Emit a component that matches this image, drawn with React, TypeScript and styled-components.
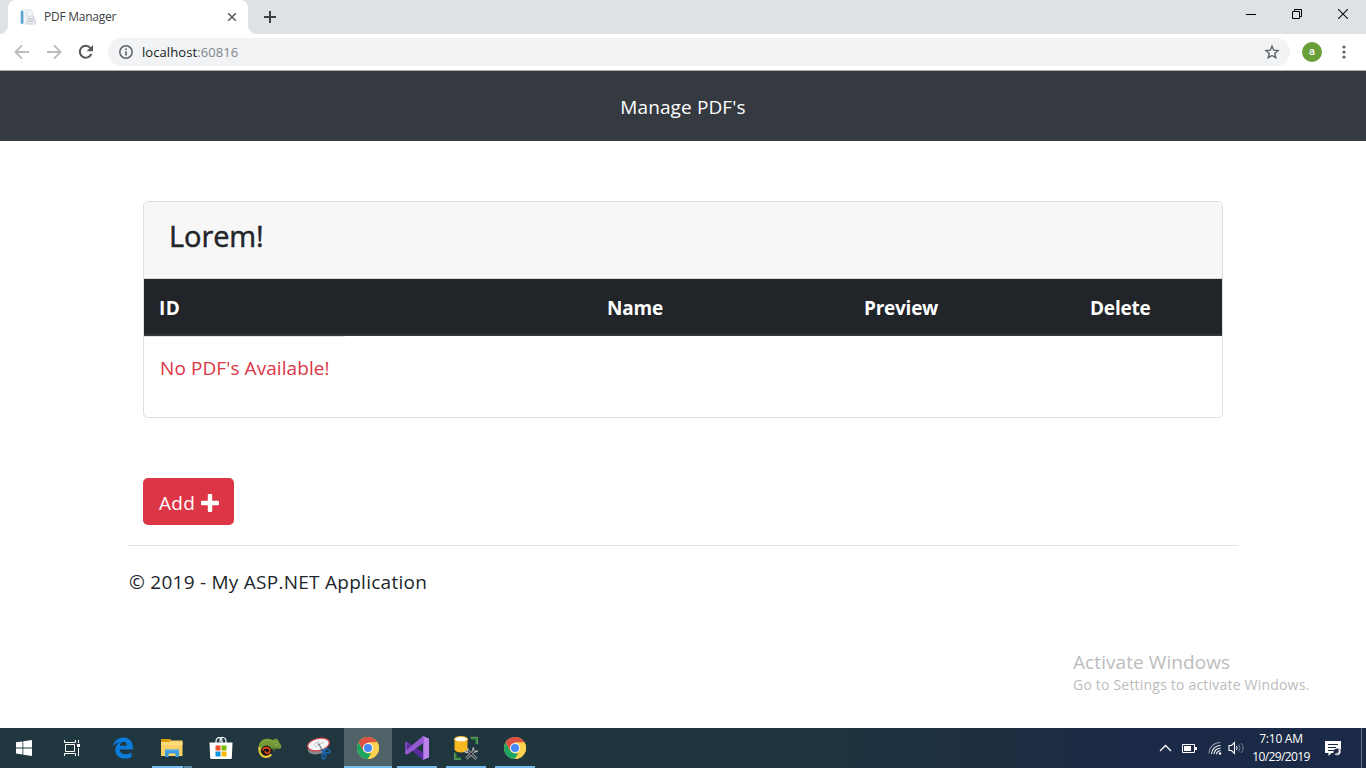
import React from "react";
import styled, { createGlobalStyle, css } from "styled-components";

const Global = createGlobalStyle`
  * { box-sizing: border-box; }
  html, body { margin: 0; padding: 0; background: #fff; overflow: hidden; }
  body { font-family: "Open Sans", "Noto Sans", sans-serif; color: #212529; }
  svg { display: block; flex: none; }
`;

const Screen = styled.div`
  width: 1366px;
  height: 768px;
  display: flex;
  flex-direction: column;
  overflow: hidden;
  background: #fff;
`;

const Text = styled.span<{ $size: number; $spacing?: number; $weight?: number; $color?: string }>`
  display: block;
  white-space: nowrap;
  font-size: ${(p) => p.$size}px;
  letter-spacing: ${(p) => p.$spacing ?? 0}px;
  font-weight: ${(p) => p.$weight ?? 400};
  color: ${(p) => p.$color ?? "inherit"};
`;

/* ---------- browser chrome ---------- */
const TabStrip = styled.div`
  height: 34px;
  flex: none;
  display: flex;
  background: #dee1e6;
  padding-left: 8px;
`;

const Tab = styled.div`
  position: relative;
  width: 240px;
  height: 34px;
  background: #fff;
  border-radius: 8px 8px 0 0;
  display: flex;
  align-items: center;
  padding: 0 11px 0 12px;
  gap: 8px;
  &::before,
  &::after {
    content: "";
    position: absolute;
    bottom: 0;
    width: 8px;
    height: 8px;
  }
  &::before {
    left: -8px;
    background: radial-gradient(circle at 0 0, transparent 7.5px, #fff 8px);
  }
  &::after {
    right: -8px;
    background: radial-gradient(circle at 100% 0, transparent 7.5px, #fff 8px);
  }
`;

const TabTitle = styled(Text)`
  flex: 1;
  line-height: 16px;
`;

const NewTab = styled.div`
  width: 44px;
  display: flex;
  align-items: center;
  justify-content: center;
`;

const WindowButtons = styled.div`
  margin-left: auto;
  display: flex;
  height: 28px;
`;

const WindowButton = styled.div`
  width: 46px;
  display: flex;
  align-items: center;
  justify-content: center;
`;

const Toolbar = styled.div`
  height: 37px;
  flex: none;
  display: flex;
  align-items: center;
  background: #fff;
  border-bottom: 1px solid #a9aeae;
  padding: 0 13px 0 14px;
`;

const NavButtons = styled.div`
  display: flex;
  gap: 16px;
  margin-right: 14px;
`;

const AddressBar = styled.div`
  width: 1182px;
  height: 28px;
  border-radius: 14px;
  background: #f1f3f4;
  display: flex;
  align-items: center;
  padding: 0 10px;
`;

const Url = styled(Text)`
  margin-left: 8px;
  flex: 1;
  line-height: 20px;
  em {
    font-style: normal;
    color: #80868b;
  }
`;

const Avatar = styled.div`
  width: 20px;
  height: 20px;
  border-radius: 50%;
  background: #689f38;
  color: #fff;
  margin-left: 12px;
  font: 500 11px/19px Roboto, sans-serif;
  text-align: center;
`;

const MenuSlot = styled.div`
  margin-left: 20px;
`;

/* ---------- page ---------- */
const Navbar = styled.nav`
  height: 70px;
  flex: none;
  background: #343a40;
  display: flex;
  align-items: center;
  justify-content: center;
  padding-top: 2px;
`;

const Page = styled.main`
  flex: 1;
  display: flex;
  flex-direction: column;
  width: 1110px;
  margin: 0 auto;
`;

const Card = styled.section`
  margin: 60px 15px 0;
  height: 217px;
  border: 1px solid #dfdfdf;
  border-radius: 5px;
  overflow: hidden;
`;

const CardHeader = styled.header`
  height: 77px;
  background: #f7f7f7;
  border-bottom: 1px solid #d8d8d8;
  padding: 14px 25px 0;
  line-height: 40px;
`;

const CardTitle = styled(Text)`
  -webkit-text-stroke: 0.5px currentColor;
`;

const HeadRow = styled.div`
  height: 57px;
  display: grid;
  grid-template-columns: 448px 257px 226px 1fr;
  align-items: center;
  padding-left: 15px;
  background: #212529;
  color: #fff;
  border-bottom: 2px solid #32383e;
  padding-top: 3px;
`;

const EmptyCell = styled.div`
  width: 201px;
  height: 60px;
  border-top: 1px solid #dee2e6;
  padding: 16px 0 0 16px;
  line-height: 30px;
`;

const AddButton = styled.button`
  margin: 60px 0 0 15px;
  width: 91px;
  height: 47px;
  border: 0;
  border-radius: 5px;
  background: #dc3545;
  color: #fff;
  font-family: inherit;
  display: flex;
  align-items: center;
  gap: 6px;
  padding: 2px 0 0 16px;
`;

const Footer = styled.footer`
  margin-top: 20px;
  border-top: 1px solid #e4e4e4;
  padding: 21px 0 0 1px;
  line-height: 30px;
`;

const Watermark = styled.aside`
  align-self: flex-end;
  width: 293px;
  height: 80px;
  flex: none;
  color: #bcbcbc;
`;

const WatermarkTitle = styled(Text)`
  line-height: 28px;
`;

const WatermarkNote = styled(Text)`
  line-height: 18px;
`;

/* ---------- taskbar ---------- */
const Taskbar = styled.div`
  height: 40px;
  flex: none;
  display: flex;
  background: linear-gradient(90deg, #20373f 0%, #20363f 52%, #1e3140 65%, #1d2d41 76%, #1b2a46 82%, #1a2945 100%);
`;

const SystemSlot = styled.div`
  width: 48px;
  display: flex;
  align-items: center;
  justify-content: center;
`;

const Apps = styled.div`
  display: flex;
  gap: 1px;
  margin-left: 3px;
`;

const AppSlot = styled.div<{ $state?: "open" | "active" | "stack" }>`
  width: 48px;
  height: 40px;
  display: flex;
  align-items: center;
  justify-content: center;
  position: relative;
  ${(p) => p.$state === "active" && css`background: #4f6268;`}
  ${(p) =>
    p.$state &&
    css`
      &::after {
        content: "";
        position: absolute;
        bottom: 0;
        height: 2px;
        left: ${p.$state === "active" ? 0 : 4}px;
        right: ${p.$state === "active" ? 0 : 4}px;
        background: ${p.$state === "stack"
          ? "linear-gradient(90deg, #76b9ed 0 31px, #35505e 31px 32px, #5689a8 32px)"
          : "#76b9ed"};
      }
    `}
`;

const Tray = styled.div`
  margin-left: auto;
  display: flex;
  align-items: center;
  color: #fff;
`;

const TrayItem = styled.div<{ $width: number }>`
  width: ${(p) => p.$width}px;
  display: flex;
  justify-content: center;
`;

const Clock = styled.div`
  width: 72px;
  display: flex;
  flex-direction: column;
  align-items: center;
  line-height: 18px;
  padding-bottom: 1px;
`;

const ShowDesktop = styled.div`
  width: 5px;
  height: 40px;
  margin-left: 12px;
  border-left: 1px solid #66738a;
`;

/* ---------- icons ---------- */
const Favicon = () => (
  <svg width="16" height="16" viewBox="0 0 16 16">
    <path d="M1 .8h9.500L13 3v12H1z" fill="#f3f5f7" stroke="#d3d8dd" strokeWidth=".6" />
    <path d="M.8 2h2.600v12.600H.8z" fill="#5aa3cf" />
    <path d="M5 4h4M5 6h3M5 8h2" stroke="#d3d9df" strokeWidth=".8" />
    <path d="M8.500 7h5v3h1.800v5H7v-5h1.500z" fill="#eceff2" stroke="#c3c9d1" strokeWidth=".7" />
    <path d="M8.500 12.300h5M8.500 10h5" stroke="#a9b2be" strokeWidth=".8" />
  </svg>
);

const CloseTab = () => (
  <svg width="10" height="10" viewBox="0 0 10 10">
    <path d="M1.200 1.200l7.600 7.600M8.800 1.200L1.200 8.800" stroke="#5a5d61" strokeWidth="1.600" />
  </svg>
);

const Plus = () => (
  <svg width="12" height="12" viewBox="0 0 12 12">
    <path d="M6 0v12M0 6h12" stroke="#3c4043" strokeWidth="2" />
  </svg>
);

const Minimize = () => (
  <svg width="10" height="10" viewBox="0 0 10 10" shapeRendering="crispEdges">
    <path d="M0 5h10v1H0z" fill="#000" />
  </svg>
);

const Restore = () => (
  <svg width="10" height="10" viewBox="0 0 10 10" fill="none" stroke="#000">
    <path d="M.5 2.500h7v7h-7zM2.500 2.500v-2h7v7h-2" />
  </svg>
);

const CloseWindow = () => (
  <svg width="10" height="10" viewBox="0 0 10 10">
    <path d="M0 0l10 10M10 0L0 10" stroke="#111" strokeWidth="1.100" />
  </svg>
);

const Arrow = ({ flip }: { flip?: boolean }) => (
  <svg width="16" height="16" viewBox="0 0 16 16" fill="none" stroke="#b9bbbe" strokeWidth="1.800">
    <path d={flip ? "M1 8h13M8 1.400L14.600 8 8 14.600" : "M15 8H2M8 1.400L1.400 8 8 14.600"} />
  </svg>
);

const Reload = () => (
  <svg width="16" height="16" viewBox="0 0 16 16">
    <path d="M13.300 9.800A5.900 5.900 0 1 1 12.300 4" fill="none" stroke="#55585c" strokeWidth="2" />
    <path d="M15 1v6.300H8.700z" fill="#55585c" />
  </svg>
);

const Info = () => (
  <svg width="16" height="16" viewBox="0 0 16 16">
    <circle cx="8" cy="8" r="6.200" fill="none" stroke="#5f6368" strokeWidth="1.500" />
    <path d="M7.200 7.200h1.600v4.200H7.200zM7.200 4.500h1.600v1.600H7.200z" fill="#5f6368" />
  </svg>
);

const Star = () => (
  <svg width="16" height="16" viewBox="0 0 16 16">
    <path
      d="M8 2.200l1.700 4 4.300.4-3.250 2.850 1 4.250L8 11.450 4.250 13.700l1-4.250L2 6.600l4.300-.4z"
      fill="none"
      stroke="#5f6368"
      strokeWidth="1.400"
    />
  </svg>
);

const Dots = () => (
  <svg width="4" height="14" viewBox="0 0 4 14" fill="#5f6368">
    <circle cx="2" cy="2" r="1.600" />
    <circle cx="2" cy="7" r="1.600" />
    <circle cx="2" cy="12" r="1.600" />
  </svg>
);

const BoldPlus = () => (
  <svg width="18" height="18" viewBox="0 0 18 18">
    <path
      d="M7.800 0h2.400q1 0 1 1v5.800H17q1 0 1 1v2.400q0 1-1 1h-5.800V17q0 1-1 1H7.800q-1 0-1-1v-5.800H1q-1 0-1-1V7.800q0-1 1-1h5.800V1q0-1 1-1z"
      fill="#fff"
    />
  </svg>
);

const StartIcon = () => (
  <svg width="16" height="16" viewBox="0 0 16 16" fill="#fff">
    <path d="M0 2.300l6.500-.9v6.100H0zM7.300 1.300L16 0v7.500H7.300zM0 8.400h6.500v6.100L0 13.600zM7.300 8.400H16V16l-8.700-1.300z" />
  </svg>
);

const TaskViewIcon = () => (
  <svg width="16" height="16" viewBox="0 0 16 16" fill="none" stroke="#fff">
    <path d="M1.500 4.500h9v7h-9z" strokeWidth="1" />
    <path d="M.5 0v2.500h11V0M.5 16v-2.500h11V16M14.500 0v3M14.500 8v8" strokeWidth="1" />
    <path d="M13 4h3v3h-3z" fill="#fff" stroke="none" />
  </svg>
);

const EdgeIcon = () => (
  <svg width="20" height="22" viewBox="0 0 20 22">
    <path
      d="M0 9.400C.8 4 4.700.4 10.200.4c6 0 9.700 4.200 9.700 9.900v2.200H6.700c.2 3.300 3 4.700 6.100 4.700 2.200 0 4.200-.6 5.700-1.600v4.500c-1.900 1-4.300 1.500-6.600 1.500-5.700 0-9.600-3.500-9.600-8.700 0-3.300 1.700-6 4.700-7.600-2.800.2-5.300 1.600-7 4.100zM6.900 8.800h6.900c0-2.500-1.200-4-3.300-4-1.900 0-3.300 1.600-3.600 4z"
      fill="#0b7bdc"
      fillRule="evenodd"
    />
  </svg>
);

const ExplorerIcon = () => (
  <svg width="22" height="18" viewBox="0 0 22 18">
    <path d="M0 0h9l1 1.500h11.500V17H0z" fill="#f9d265" />
    <path d="M0 0h9l.6 1.300L8.300 3H0z" fill="#dc9b08" />
    <path d="M0 3h21.500v3H0z" fill="#fddc7d" />
    <path d="M4 18v-7.500h14V18h-3.500v-3.500h-7V18z" fill="#3f9be0" />
    <path d="M4 10.500h14v1.200H4z" fill="#63b3ec" />
  </svg>
);

const StoreIcon = () => (
  <svg width="24" height="24" viewBox="0 0 24 24">
    <path d="M7 8V5.500C7 .2 13 .2 13 5.500V7M11 6.500V4.500C11 .3 17 .3 17 5.500V8" fill="none" stroke="#fff" strokeWidth="1.200" />
    <path d="M.5 6.500h23L22.800 22q-.1 1-1 1H2.200q-.9 0-1-1z" fill="#fff" />
    <path d="M6.500 9.500H11.500v5h-5z" fill="#f2502a" />
    <path d="M12.500 9.500h5v5h-5z" fill="#7fba00" />
    <path d="M6.500 15.500h5v5h-5z" fill="#089ae0" />
    <path d="M12.500 15.500h5v5h-5z" fill="#fdb900" />
  </svg>
);

const ChameleonIcon = () => (
  <svg width="24" height="22" viewBox="0 0 24 22">
    <path d="M.6 11C.6 5 4.500 1.700 9.500 1.800c2.500 0 4 .6 5.500 1.200C17 .8 20 1.300 20.800 4.500l2.700 4.700-.8 2.300c-2.200.6-4 .2-5.700-.5l-3 1.500L8 10l-6 3z" fill="#719a37" />
    <path d="M3 5.500C6.500 2 12 2.800 15.500 5" fill="none" stroke="#8fae4a" strokeWidth="1" />
    <path d="M13.500 10l3 1.500v2.200M18 10.500l1.500 1.300" fill="none" stroke="#5b7c2c" strokeWidth="1.400" />
    <circle cx="18.300" cy="6.500" r="1.200" fill="#b8c088" />
    <circle cx="18.300" cy="6.500" r=".6" fill="#262a16" />
    <circle cx="8.500" cy="13.800" r="5.200" fill="#171310" />
    <path d="M1.700 10C.5 15.500 3.500 19.800 7.800 19.900c2.300 0 4.300-1 5.300-2.700" fill="none" stroke="#e9c93a" strokeWidth="2.200" />
    <path d="M5 13.500c.3-4 7-3.800 6.800.3-.2 3.300-4.800 3.400-4.700.2" fill="none" stroke="#e8481c" strokeWidth="1.600" />
  </svg>
);

const SnipIcon = () => (
  <svg width="24" height="23" viewBox="0 0 24 23">
    <path d="M1 12c-.4 3.500 2.500 5.600 8 5.400l6-1.200L20.500 9z" fill="#87898c" />
    <ellipse cx="11.500" cy="7.500" rx="11" ry="6" transform="rotate(-13 11.500 7.500)" fill="#f7f7f8" stroke="#d6444c" strokeWidth="1.200" />
    <path d="M6 8.500l5-4M8 10l9-5M12 4l-1 4" fill="none" stroke="#b4b7bc" strokeWidth=".9" />
    <path d="M11.500 6.500l4 7" stroke="#73777c" strokeWidth="1.200" />
    <g fill="none" stroke="#1769b2" strokeWidth="1.600">
      <ellipse cx="20.300" cy="14" rx="2.700" ry="1.900" transform="rotate(20 20.300 14)" />
      <ellipse cx="16.800" cy="19" rx="1.700" ry="2.800" transform="rotate(12 16.800 19)" />
      <path d="M18 14l-4-1M16.500 16.500l-1-3.500" />
    </g>
  </svg>
);

const ChromeIcon = () => (
  <svg width="22" height="22" viewBox="0 0 22 22">
    <circle cx="11" cy="11" r="11" fill="#fdd04f" />
    <path d="M1.500 5.500A11 11 0 0 1 20.500 5.500H11L6.200 13.800z" fill="#dd5144" />
    <path d="M1.470 5.500L6.240 13.750Q8 16 11 16.500H15.500L10.600 22A11 11 0 0 1 1.470 5.500z" fill="#1da462" />
    <path d="M20.530 5.500H11L15.800 13.750 10.800 22A11 11 0 0 0 20.530 5.500z" fill="#fdd04f" />
    <circle cx="11" cy="11" r="5.100" fill="#f5f6f7" />
    <circle cx="11" cy="11" r="4" fill="#4489f5" />
  </svg>
);

const VisualStudioIcon = () => (
  <svg width="24" height="24" viewBox="0 0 24 24">
    <path d="M0 6.500L2.400 5.400 19 17.500 18 24 .3 8.500z" fill="#5b2d9f" />
    <path d="M0 6.500l2.400-1.100v13.200L0 17.500z" fill="#7746bb" />
    <path d="M2.400 18.600L0 17.500.2 15 18 0l1 6.500z" fill="#9259d3" />
    <path d="M18 0l6 2.400v19.200L18 24z" fill="#bc83ed" />
    <path d="M18 0l1 .4v23.200l-1 .4z" fill="#9d65db" />
  </svg>
);

const SqlIcon = () => (
  <svg width="24" height="24" viewBox="0 0 24 24">
    <path d="M.5 2.500h13v11q-1.500 3-6.500 3t-6.500-3z" fill="#f6b91f" />
    <ellipse cx="7" cy="3.200" rx="6.500" ry="2.700" fill="#fff" stroke="#f6b91f" />
    <path d="M17 2.500h5.500V8M1.500 17v5.500H7" fill="none" stroke="#338c38" strokeWidth="2" />
    <path d="M16.300 1.300h7.400v7M.3 16.300v7.400h7" fill="none" stroke="#b6d8ae" strokeWidth=".5" />
    <g fill="none" stroke="#b8bbbc" strokeWidth="2.800">
      <path d="M12.500 22.500l8-8M14 15l8.500 8" />
      <path d="M19.500 11.500c-1 3 1 5 4.200 3.500M10.500 15c2 2.500 4.500 1 3-2.500" strokeWidth="1.800" />
    </g>
    <g fill="none" stroke="#33383a" strokeWidth="1.400">
      <path d="M12.500 22.500l8-8M14 15l8.500 8" />
    </g>
  </svg>
);

const ChevronIcon = () => (
  <svg width="13" height="8" viewBox="0 0 13 8">
    <path d="M1 7l5.500-5.500L12 7" fill="none" stroke="#fff" strokeWidth="1.300" />
  </svg>
);

const BatteryIcon = () => (
  <svg width="15" height="9" viewBox="0 0 15 9">
    <path d="M.5.5h12v8H.5z" fill="none" stroke="#fff" />
    <path d="M2 2h7v5H2zM13 3h2v3h-2z" fill="#fff" />
  </svg>
);

const WifiIcon = () => (
  <svg width="14" height="14" viewBox="0 0 14 14" fill="none">
    <path d="M1 12.500A11 11 0 0 1 12.500 1.500" stroke="#8e98a8" strokeWidth="1.100" />
    <path d="M3.500 13A8.700 8.700 0 0 1 12.500 4.500" stroke="#fff" strokeWidth="1.100" />
    <path d="M6 13a6 6 0 0 1 6.500-5.700M8.500 13.200a3.600 3.600 0 0 1 4-3.400" stroke="#fff" strokeWidth="1.100" />
    <circle cx="12" cy="12.500" r="1.300" fill="#fff" />
  </svg>
);

const VolumeIcon = () => (
  <svg width="17" height="14" viewBox="0 0 17 14" fill="none">
    <path d="M1 4.500h2.500L6.500 1.500v11L3.500 9.500H1z" stroke="#fff" strokeWidth="1.100" />
    <path d="M8.500 5q1.300 2 0 4" stroke="#fff" />
    <path d="M10.800 3.500q2.500 3.500 0 7M13.200 2q4 5 0 10" stroke="#73809a" />
  </svg>
);

const NoticeIcon = () => (
  <svg width="17" height="17" viewBox="0 0 17 17">
    <path d="M0 1h16v12H6.500l-3 3v-3H0z" fill="#fff" />
    <path d="M3 4.500h10M3 7.500h8M3 10.500h6" stroke="#1b2945" />
    <circle cx="12.500" cy="12.500" r="4" fill="#1b2945" />
    <path d="M13.500 8.500a5 5 0 0 1-4 5.500 3.500 3.500 0 1 0 4-5.500z" fill="#fff" />
    <path d="M13.500 10.500q.5 3-2 4" stroke="#1b2945" fill="none" strokeWidth=".7" />
  </svg>
);

const columns = [
  { label: "ID", spacing: 0.4 },
  { label: "Name", spacing: -0.2 },
  { label: "Preview", spacing: -0.25 },
  { label: "Delete", spacing: -0.2 },
];

const apps: { name: string; icon: React.ReactNode; state?: "open" | "active" | "stack" }[] = [
  { name: "edge", icon: <EdgeIcon /> },
  { name: "explorer", icon: <ExplorerIcon />, state: "stack" },
  { name: "store", icon: <StoreIcon /> },
  { name: "chameleon", icon: <ChameleonIcon /> },
  { name: "snip", icon: <SnipIcon /> },
  { name: "chrome", icon: <ChromeIcon />, state: "active" },
  { name: "studio", icon: <VisualStudioIcon />, state: "open" },
  { name: "sql", icon: <SqlIcon />, state: "open" },
  { name: "chrome-2", icon: <ChromeIcon />, state: "open" },
];

export default function App() {
  return (
    <>
      <Global />
      <Screen>
        <TabStrip>
          <Tab>
            <Favicon />
            <TabTitle $size={12} $spacing={-0.25} $color="#3c4043">PDF Manager</TabTitle>
            <CloseTab />
          </Tab>
          <NewTab><Plus /></NewTab>
          <WindowButtons>
            <WindowButton><Minimize /></WindowButton>
            <WindowButton><Restore /></WindowButton>
            <WindowButton><CloseWindow /></WindowButton>
          </WindowButtons>
        </TabStrip>
        <Toolbar>
          <NavButtons>
            <Arrow />
            <Arrow flip />
            <Reload />
          </NavButtons>
          <AddressBar>
            <Info />
            <Url $size={13} $spacing={0.08} $color="#202124">localhost<em>:60816</em></Url>
            <Star />
          </AddressBar>
          <Avatar>a</Avatar>
          <MenuSlot><Dots /></MenuSlot>
        </Toolbar>
        <Navbar>
          <Text $size={19} $spacing={0.12} $color="#fff">Manage PDF's</Text>
        </Navbar>
        <Page>
          <Card>
            <CardHeader>
              <CardTitle $size={29} $spacing={-0.1}>Lorem!</CardTitle>
            </CardHeader>
            <HeadRow>
              {columns.map((c) => (
                <Text key={c.label} $size={19} $spacing={c.spacing} $weight={700}>{c.label}</Text>
              ))}
            </HeadRow>
            <EmptyCell>
              <Text $size={19} $spacing={0.08} $color="#dc3545">No PDF's Available!</Text>
            </EmptyCell>
          </Card>
          <AddButton>
            <Text $size={19} $spacing={0.3}>Add</Text>
            <BoldPlus />
          </AddButton>
          <Footer>
            <Text $size={19} $spacing={0.26}>© 2019 - My ASP.NET Application</Text>
          </Footer>
        </Page>
        <Watermark>
          <WatermarkTitle $size={19} $spacing={0.08}>Activate Windows</WatermarkTitle>
          <WatermarkNote $size={14} $spacing={0.2}>Go to Settings to activate Windows.</WatermarkNote>
        </Watermark>
        <Taskbar>
          <SystemSlot><StartIcon /></SystemSlot>
          <SystemSlot><TaskViewIcon /></SystemSlot>
          <Apps>
            {apps.map((a) => (
              <AppSlot key={a.name} $state={a.state}>{a.icon}</AppSlot>
            ))}
          </Apps>
          <Tray>
            <TrayItem $width={24}><ChevronIcon /></TrayItem>
            <TrayItem $width={24}><BatteryIcon /></TrayItem>
            <TrayItem $width={27}><WifiIcon /></TrayItem>
            <TrayItem $width={17}><VolumeIcon /></TrayItem>
            <Clock>
              <Text $size={12} $spacing={-0.25}>7:10 AM</Text>
              <Text $size={12} $spacing={-0.6}>10/29/2019</Text>
            </Clock>
            <TrayItem $width={32}><NoticeIcon /></TrayItem>
            <ShowDesktop />
          </Tray>
        </Taskbar>
      </Screen>
    </>
  );
}
